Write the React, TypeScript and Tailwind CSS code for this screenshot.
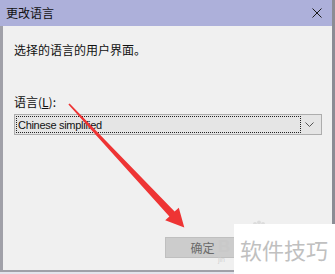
import React from "react";

export default function App() {
  const cjk = { fontFamily: '"Noto Sans CJK SC", "Noto Sans", sans-serif' } as React.CSSProperties;
  return (
    <div className="relative w-[335px] h-[274px] overflow-hidden flex bg-[#f0f0f0]" style={cjk}>
      <div className="flex flex-col w-[332px] h-full">
        <div className="h-[26px] bg-[#adb0da] flex items-center justify-between pl-[6px] pr-[10px]">
          <span className="text-[12px] leading-[16px] text-[#111]">更改语言</span>
          <svg width="10" height="10" viewBox="0 0 10 10" className="block">
            <path d="M0.5 0.5 L9.5 9.5 M9.5 0.5 L0.5 9.5" stroke="#1a1a1a" strokeWidth="1" />
          </svg>
        </div>
        <div className="flex-1 flex flex-col border-l-[3px] border-[#a0a0a8] pl-[11px] pr-[10px] pt-[16px]">
          <div className="text-[12px] leading-[16px] text-[#111]">选择的语言的用户界面。</div>
          <div className="mt-[36px] text-[12px] leading-[16px] text-[#111]">
            语言(<span className="underline">L</span>):
          </div>
          <div className="mt-[4px] h-[21px] bg-[#e5e5e5] border border-[#adadad] flex items-center pl-[1px] pr-[4px]">
            <div className="flex-1 h-[17px] border border-dotted border-[#222] flex items-center pl-[1px]">
              <span
                className="text-[11px] leading-[14px] text-[#111] tracking-[-0.3px]"
                style={{ fontFamily: '"Liberation Sans", Arial, sans-serif' }}
              >
                Chinese simplified
              </span>
            </div>
            <div className="w-[16px] flex justify-center">
              <svg width="9" height="5" viewBox="0 0 9 5" className="block">
                <path d="M0.5 0.5 L4.5 4.5 L8.5 0.5" stroke="#555" strokeWidth="1" fill="none" />
              </svg>
            </div>
          </div>
          <div className="flex-1" />
          <div className="flex pl-[151px] mb-[12px]">
            <div className="w-[75px] h-[21px] bg-[#cccccc] border border-[#bfbfbf] flex items-center justify-center">
              <span className="text-[12px] leading-[14px] text-[#6a6a6a]">确定</span>
            </div>
          </div>
        </div>
        <div className="h-[2px] bg-[#a0a0a8]" />
        <div className="h-[2px] bg-[#e4e4ec]" />
      </div>
      <div className="w-[3px] h-full bg-[#8c8c94]" />

      {/* Baidu watermark logo (partially covered) */}
      <div className="absolute left-[218px] top-[238px] flex flex-col leading-none">
        <span className="text-[17px] font-bold text-[#c9c9c9]" style={{ fontFamily: '"Liberation Sans", sans-serif' }}>B</span>
        <span className="text-[7px] text-[#d2d2d2] mt-[1px]" style={{ fontFamily: '"Liberation Sans", sans-serif' }}>jin</span>
      </div>
      <svg className="absolute left-[252px] top-[220px]" width="14" height="10" viewBox="0 0 14 10">
        <circle cx="3" cy="4" r="2" fill="#dcdcdc" />
        <circle cx="7" cy="2.5" r="2" fill="#dcdcdc" />
        <circle cx="11" cy="4" r="2" fill="#dcdcdc" />
      </svg>
      {/* white watermark box */}
      <div className="absolute left-[234px] top-[224px] w-[101px] h-[50px] bg-white flex items-center pl-[6px]">
        <span className="text-[22px] leading-[26px] text-[#c0c0c0]">软件技巧</span>
      </div>

      {/* red arrow annotation */}
      <svg className="absolute left-0 top-0 pointer-events-none" width="335" height="274" viewBox="0 0 335 274">
        <polygon
          points="69.6,103.5 174.6,211.5 178.8,207.7 184.3,227.6 165.2,220.3 169.4,216.4 68.4,104.5"
          fill="#ee3434"
        />
      </svg>
    </div>
  );
}
